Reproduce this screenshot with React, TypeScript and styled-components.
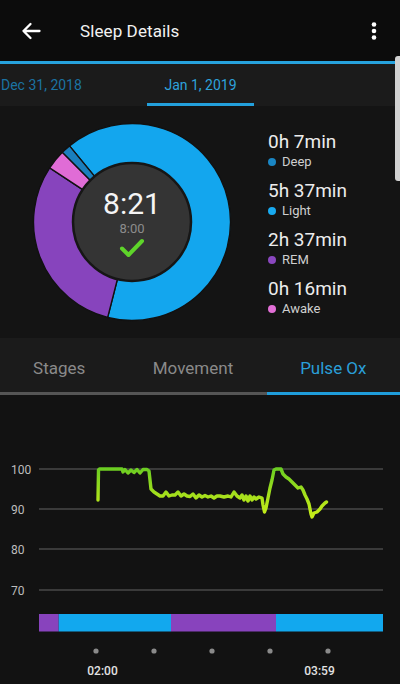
import React from "react";
import styled, { createGlobalStyle } from "styled-components";

const GlobalStyle = createGlobalStyle`
  html, body {
    margin: 0;
    padding: 0;
    background: #121212;
  }
  body {
    font-family: Roboto, "Noto Sans", "Liberation Sans", sans-serif;
    -webkit-font-smoothing: antialiased;
  }
`;

const Screen = styled.div`
  position: relative;
  width: 400px;
  height: 684px;
  overflow: hidden;
  background: #121212;
  display: flex;
  flex-direction: column;
`;

const AppBar = styled.header`
  height: 61px;
  flex-shrink: 0;
  background: #0c0c0c;
  display: flex;
  align-items: center;
  padding: 0 16px 0 21px;
`;

const IconButton = styled.div`
  width: 20px;
  height: 20px;
  display: flex;
  align-items: center;
  justify-content: center;
`;

const Title = styled.h1`
  margin: 0 0 0 39px;
  flex: 1;
  font-size: 17px;
  font-weight: 400;
  color: #f2f2f2;
  letter-spacing: 0.1px;
`;

const AccentLine = styled.div`
  height: 3px;
  flex-shrink: 0;
  background: #27a3de;
`;

const DateStrip = styled.nav`
  height: 42px;
  flex-shrink: 0;
  background: #1b1b1b;
  display: flex;
  align-items: stretch;
`;

const DateTab = styled.div<{ $active?: boolean; $width: number; $offset: number }>`
  width: ${(p) => p.$width}px;
  flex-shrink: 0;
  margin-left: ${(p) => p.$offset}px;
  display: flex;
  align-items: center;
  justify-content: ${(p) => (p.$active ? "center" : "flex-start")};
  white-space: nowrap;
  font-size: 14px;
  color: ${(p) => (p.$active ? "#2ea2db" : "#1b73a3")};
  box-sizing: border-box;
  padding-top: 2px;
  border-bottom: 3px solid ${(p) => (p.$active ? "#23a0dc" : "transparent")};
`;

const Summary = styled.section`
  height: 232px;
  flex-shrink: 0;
  background: #141414;
  display: flex;
  align-items: flex-start;
`;

const DonutWrap = styled.div`
  position: relative;
  width: 200px;
  height: 200px;
  margin: 16px 0 0 32px;
`;

const DonutCenter = styled.div`
  position: absolute;
  inset: 0;
  display: flex;
  flex-direction: column;
  align-items: center;
  justify-content: center;
  padding-top: 2px;
`;

const TotalTime = styled.div`
  font-size: 30px;
  line-height: 34px;
  color: #f5f5f5;
`;

const GoalTime = styled.div`
  font-size: 13px;
  line-height: 16px;
  color: #8c8c8c;
`;

const Legend = styled.ul`
  list-style: none;
  margin: 25px 0 0 36px;
  padding: 0;
`;

const LegendItem = styled.li`
  height: 49px;
`;

const LegendValue = styled.div`
  font-size: 19px;
  line-height: 22px;
  color: #ececec;
`;

const LegendLabel = styled.div`
  display: flex;
  align-items: center;
  font-size: 13px;
  line-height: 18px;
  color: #cfcfcf;
`;

const Dot = styled.span<{ $color: string }>`
  width: 8px;
  height: 8px;
  border-radius: 50%;
  background: ${(p) => p.$color};
  margin-right: 6px;
`;

const TabBar = styled.nav`
  height: 57px;
  flex-shrink: 0;
  background: #1b1b1b;
  display: grid;
  grid-template-columns: 1fr 1fr 1fr;
`;

const Tab = styled.div<{ $active?: boolean; $shift: number }>`
  min-width: 0;
  display: flex;
  align-items: center;
  justify-content: center;
  box-sizing: border-box;
  padding: 5px ${(p) => p.$shift}px 0 0;
  font-size: 17px;
  color: ${(p) => (p.$active ? "#2a9fd8" : "#8a8a8a")};
  border-bottom: 3px solid ${(p) => (p.$active ? "#1f9ddb" : "#555555")};
`;

const Chart = styled.svg`
  display: block;
  flex: 1;
  width: 400px;
`;

const Scrollbar = styled.div`
  position: absolute;
  top: 56px;
  right: 0;
  width: 5px;
  height: 125px;
  background: #d2d2d2;
  border-radius: 3px 0 0 3px;
`;

const arcPath = (a0: number, a1: number, r0: number, r1: number) => {
  const cx = 100;
  const cy = 100;
  const pt = (r: number, a: number) => {
    const rad = (a * Math.PI) / 180;
    return `${(cx + r * Math.sin(rad)).toFixed(2)},${(cy - r * Math.cos(rad)).toFixed(2)}`;
  };
  const large = a1 - a0 > 180 ? 1 : 0;
  return `M${pt(r1, a0)} A${r1},${r1} 0 ${large} 1 ${pt(r1, a1)} L${pt(r0, a1)} A${r0},${r0} 0 ${large} 0 ${pt(r0, a0)} Z`;
};

const segments = [
  { from: 320.6, to: 554.3, color: "#13a6ee" },
  { from: 194.3, to: 303.3, color: "#8744bd" },
  { from: 303.3, to: 315, color: "#e06cd6" },
  { from: 315, to: 320.6, color: "#1a7fbd" },
];

const legend = [
  { value: "0h 7min", label: "Deep", color: "#1a86c4" },
  { value: "5h 37min", label: "Light", color: "#18aaf0" },
  { value: "2h 37min", label: "REM", color: "#8a47bf" },
  { value: "0h 16min", label: "Awake", color: "#e26fd6" },
];

const pulsePoints =
  "98,500 98.5,470 99.5,469 122,469 123,472 125,469.5 128,473 131,470 134,472.5 137,469.5 140,473 143,469.5 147,469.5 149,471 150,480 151,489 154,492 157,494 160,496 163,496 166,492 169,496 172,495 175,495 178,492 181,496 184,494 187,496 190,496.5 193,494 196,498 199,495 202,497 205,495.5 208,497 211,496 214,498 217,496 220,496 224,497 228,496 231,497 234,492 237,496 240,498 242,495 244,500 246,496 248,501 250,496 252,500 254,497 256,499 259,497 262,498 263,505 264.5,512 266,508 268,498 270,488 272,480 274,470 276,469 281,469 283,474 286,477 289,479 292,482 295,485 298,488 301,487 303,490 305,495 307,499 309,504 311,514 312,517 314,513 317,512 320,509 322,506 325,503 326.5,502";

const gridLines = [
  { y: 469, label: "100" },
  { y: 509, label: "90" },
  { y: 549, label: "80" },
  { y: 590, label: "70" },
];

const stageBar = [
  { x0: 39, x1: 58.7, color: "#8843bd" },
  { x0: 58.7, x1: 171, color: "#12a8ee" },
  { x0: 171, x1: 276, color: "#8843bd" },
  { x0: 276, x1: 383, color: "#12a8ee" },
];

const tickDots = [96, 154, 212, 270, 328];

export default function App() {
  return (
    <>
      <GlobalStyle />
      <Screen>
        <AppBar>
          <IconButton>
            <svg width="20" height="18" viewBox="0 0 20 18">
              <path d="M18.5 9H2.5M9.5 2L2.5 9l7 7" fill="none" stroke="#fff" strokeWidth="2.3" strokeLinecap="round" strokeLinejoin="round" />
            </svg>
          </IconButton>
          <Title>Sleep Details</Title>
          <IconButton>
            <svg width="6" height="20" viewBox="0 0 6 20">
              <circle cx="3" cy="3.5" r="2.3" fill="#fff" />
              <circle cx="3" cy="10" r="2.3" fill="#fff" />
              <circle cx="3" cy="16.5" r="2.3" fill="#fff" />
            </svg>
          </IconButton>
        </AppBar>
        <AccentLine />
        <DateStrip>
          <DateTab $width={80} $offset={1}>Dec 31, 2018</DateTab>
          <DateTab $active $width={107} $offset={66}>Jan 1, 2019</DateTab>
        </DateStrip>
        <Summary>
          <DonutWrap>
            <svg width="200" height="200" viewBox="0 0 200 200">
              {segments.map((s) => (
                <path key={s.from} d={arcPath(s.from, s.to, 58, 98.5)} fill={s.color} stroke="#111" strokeWidth="1.4" />
              ))}
              <circle cx="100" cy="100" r="59" fill="#343434" stroke="#161616" strokeWidth="2.5" />
            </svg>
            <DonutCenter>
              <TotalTime>8:21</TotalTime>
              <GoalTime>8:00</GoalTime>
              <svg width="26" height="22" viewBox="0 0 26 22">
                <path d="M3 11.5l6.5 6.5L23 4" fill="none" stroke="#5ed42a" strokeWidth="4" strokeLinecap="round" strokeLinejoin="round" />
              </svg>
            </DonutCenter>
          </DonutWrap>
          <Legend>
            {legend.map((l) => (
              <LegendItem key={l.label}>
                <LegendValue>{l.value}</LegendValue>
                <LegendLabel>
                  <Dot $color={l.color} />
                  {l.label}
                </LegendLabel>
              </LegendItem>
            ))}
          </Legend>
        </Summary>
        <TabBar>
          <Tab $shift={15}>Stages</Tab>
          <Tab $shift={14}>Movement</Tab>
          <Tab $active $shift={0}>Pulse Ox</Tab>
        </TabBar>
        <Chart viewBox="0 395 400 289" preserveAspectRatio="xMinYMin">
          <defs>
            <linearGradient id="pulse" gradientUnits="userSpaceOnUse" x1="0" y1="468" x2="0" y2="518">
              <stop offset="0" stopColor="#6acd22" />
              <stop offset="0.55" stopColor="#a6e01c" />
              <stop offset="1" stopColor="#c8ee18" />
            </linearGradient>
          </defs>
          {gridLines.map((g) => (
            <g key={g.label}>
              <line x1="39" x2="383" y1={g.y} y2={g.y} stroke="#484848" strokeWidth="1.5" />
              <text x="11" y={g.y + 4.5} fontSize="12" fill="#bdbdbd" fontFamily="Roboto, sans-serif">
                {g.label}
              </text>
            </g>
          ))}
          <polyline points={pulsePoints} fill="none" stroke="url(#pulse)" strokeWidth="3.4" strokeLinejoin="round" strokeLinecap="round" />
          {stageBar.map((s) => (
            <rect key={s.x0} x={s.x0} y="614" width={s.x1 - s.x0} height="17.5" fill={s.color} />
          ))}
          {tickDots.map((x) => (
            <circle key={x} cx={x} cy="651" r="2.6" fill="#8a8a8a" />
          ))}
          <text x="102.5" y="674.5" textAnchor="middle" fontSize="12" fontWeight="500" fill="#e2e2e2" fontFamily="Roboto, sans-serif">
            02:00
          </text>
          <text x="319.5" y="674.5" textAnchor="middle" fontSize="12" fontWeight="500" fill="#e2e2e2" fontFamily="Roboto, sans-serif">
            03:59
          </text>
        </Chart>
        <Scrollbar />
      </Screen>
    </>
  );
}
